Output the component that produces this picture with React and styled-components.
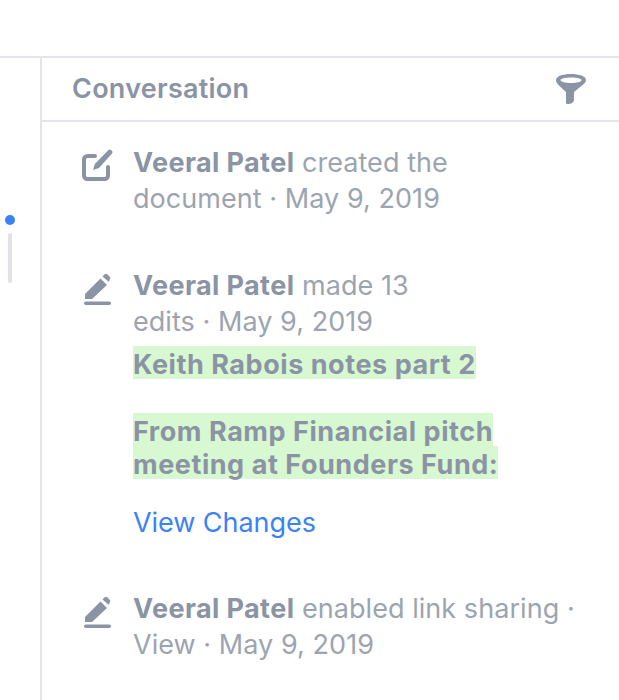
import React from "react";
import styled, { createGlobalStyle } from "styled-components";

const GlobalStyle = createGlobalStyle`
  html, body {
    margin: 0;
    padding: 0;
    background: #fff;
  }
  body {
    font-family: Inter, "Noto Sans", "Liberation Sans", sans-serif;
    overflow: hidden;
  }
`;

const Page = styled.div`
  width: 619px;
  height: 700px;
  display: flex;
  flex-direction: column;
  overflow: hidden;
`;

const TopBar = styled.div`
  height: 56px;
  flex: none;
  border-bottom: 2px solid #e4e5ea;
`;

const Body = styled.div`
  flex: 1;
  display: flex;
  min-height: 0;
`;

const Gutter = styled.div`
  width: 35px;
  flex: none;
  border-right: 2px solid #e4e5ea;
  display: flex;
  flex-direction: column;
  align-items: flex-start;
  padding: 157px 0 0 5px;
`;

const Dot = styled.div`
  width: 10px;
  height: 10px;
  border-radius: 50%;
  background: #3b82f6;
`;

const Track = styled.div`
  width: 4px;
  height: 50px;
  margin: 8px 0 0 3px;
  border-radius: 2px;
  background: #e1e2e7;
`;

const Panel = styled.div`
  flex: 1;
  min-width: 0;
`;

const Header = styled.div`
  height: 62px;
  padding: 0 32px 0 30px;
  border-bottom: 2px solid #e4e5ea;
  display: flex;
  align-items: center;
  justify-content: space-between;
`;

const Title = styled.div`
  font-size: 27px;
  font-weight: 600;
  color: #8a94a4;
  letter-spacing: 0.25px;
  padding-bottom: 2px;
`;

const Feed = styled.div`
  padding: 23px 30px 0 37px;
  display: flex;
  flex-direction: column;
`;

const Entry = styled.div`
  display: flex;
  margin-bottom: ${(p) => p.$gap || 0}px;
`;

const IconSlot = styled.div`
  width: ${(p) => 54 - (p.$inset || 0)}px;
  margin-left: ${(p) => p.$inset || 0}px;
  flex: none;
  padding-top: ${(p) => p.$top || 0}px;
`;

const Content = styled.div`
  flex: 1;
  min-width: 0;
`;

const Line = styled.div`
  font-size: 27px;
  line-height: 35.5px;
  color: #9ca4b0;
  letter-spacing: 0.05px;
`;

const Name = styled.span`
  font-weight: 700;
  color: #8a94a4;
  letter-spacing: 0.4px;
`;

const Added = styled.div`
  font-size: 27px;
  line-height: 29px;
  font-weight: 700;
  color: #8a94a4;
  letter-spacing: 0.55px;
  margin-top: ${(p) => p.$top || 0}px;
`;

const Mark = styled.span`
  display: inline-block;
  padding-top: 4px;
  background: #d8f8d2;
`;

const ChangesLink = styled.a`
  display: block;
  margin-top: 26px;
  font-size: 27px;
  line-height: 35px;
  color: #3b82f6;
  letter-spacing: -0.05px;
`;

const EditIcon = () => (
  <svg width="34" height="34" viewBox="0 0 34 34" fill="none" style={{ display: "block" }}>
    <path
      d="M15 7H7.500C5.500 7 4 8.500 4 10.500v16C4 28.500 5.500 30 7.500 30h17c2 0 3.500-1.500 3.500-3.500V18"
      stroke="#8a94a4"
      strokeWidth="4"
      strokeLinecap="round"
    />
    <path
      d="M28.500 1c.8-.7 1.800-.7 2.500 0l1 1c.7.7.7 1.700 0 2.500L19 19l-6 2 1.800-6z"
      fill="#8a94a4"
    />
  </svg>
);

const PencilIcon = () => (
  <svg width="30" height="34" viewBox="0 0 30 34" fill="none" style={{ display: "block" }}>
    <path d="M1 22 16.500 6.500l6.500 6.500L8 27H1z" fill="#8a94a4" />
    <path
      d="M18.500 4.500l2.200-2.200c.8-.8 1.800-.8 2.500 0l2.500 2.500c.8.8.8 1.800 0 2.500L24.900 9.900z"
      fill="#8a94a4"
    />
    <rect x="0" y="29.500" width="27" height="3.500" rx="1.700" fill="#8a94a4" />
  </svg>
);

const FunnelIcon = () => (
  <svg width="32" height="32" viewBox="0 0 32 32" fill="none">
    <path
      fillRule="evenodd"
      d="M16 1C7.500 1 1 3.300 1 7c0 2 1 3.500 3 5.500L11 19v10.500c0 1 .8 1.500 1.800 1.500 3 0 5.700-1 6.200-4V19l8-6.500C29.500 10.500 31 9 31 7c0-3.700-6.500-6-15-6zm0 3.500c6 0 10.500 1.100 10.500 2.700S22 10 16 10 5.500 8.800 5.500 7.200 10 4.500 16 4.500z"
      fill="#8a94a4"
    />
  </svg>
);

export default function App() {
  return (
    <Page>
      <GlobalStyle />
      <TopBar />
      <Body>
        <Gutter>
          <Dot />
          <Track />
        </Gutter>
        <Panel>
          <Header>
            <Title>Conversation</Title>
            <FunnelIcon />
          </Header>
          <Feed>
            <Entry $gap={52}>
              <IconSlot $inset={1} $top={4}><EditIcon /></IconSlot>
              <Content>
                <Line><Name>Veeral Patel</Name> created the</Line>
                <Line>document · May 9, 2019</Line>
              </Content>
            </Entry>
            <Entry $gap={51}>
              <IconSlot $inset={5} $top={4}><PencilIcon /></IconSlot>
              <Content>
                <Line><Name>Veeral Patel</Name> made 13</Line>
                <Line>edits · May 9, 2019</Line>
                <Added $top={7}><Mark>Keith Rabois notes part 2</Mark></Added>
                <Added $top={34}>
                  <Mark>From Ramp Financial pitch</Mark>
                  <br />
                  <Mark>meeting at Founders Fund:</Mark>
                </Added>
                <ChangesLink>View Changes</ChangesLink>
              </Content>
            </Entry>
            <Entry>
              <IconSlot $inset={5} $top={4}><PencilIcon /></IconSlot>
              <Content>
                <Line><Name>Veeral Patel</Name> enabled link sharing ·</Line>
                <Line>View · May 9, 2019</Line>
              </Content>
            </Entry>
          </Feed>
        </Panel>
      </Body>
    </Page>
  );
}
